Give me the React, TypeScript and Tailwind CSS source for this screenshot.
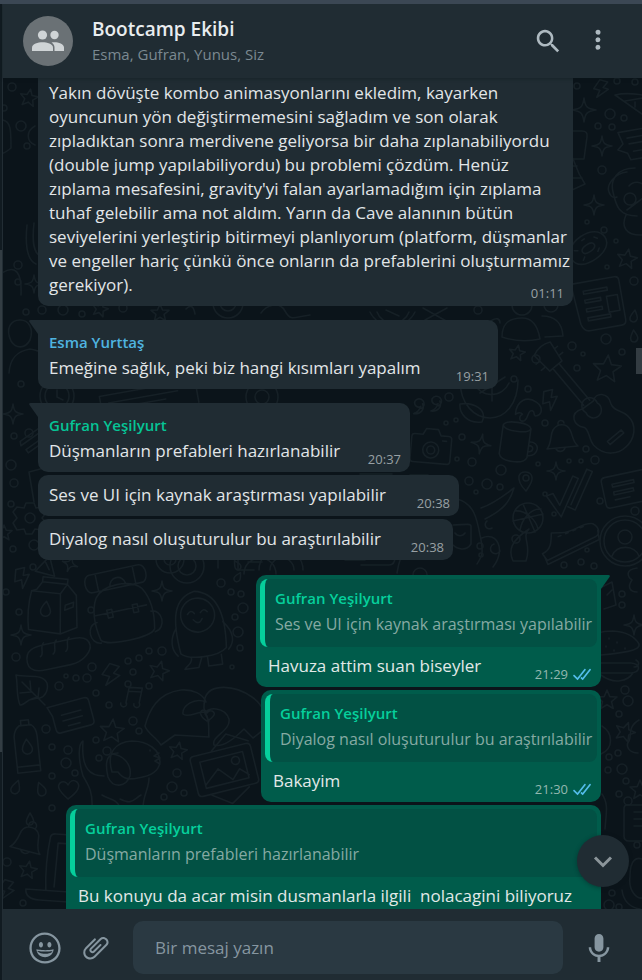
import React from "react";

type Point = [number, number];
type Placed = [number, number, number, number];

const sparkles: Placed[] = [
  [584, 110, 12, 0], [602, 146, 10, 0], [594, 205, 10, 0], [13, 414, 10, 0], [481, 444, 10, 10], [556, 471, 9, 0],
  [162, 591, 10, 0], [21, 635, 10, 0], [70, 564, 8, 20], [634, 625, 10, 0], [34, 284, 9, 0],
];
const stars: Placed[] = [
  [29, 98, 9, 10], [627, 259, 10, 10], [607, 369, 14, 5], [517, 353, 8, 10], [159, 671, 10, 15], [112, 731, 12, 5],
  [178, 751, 9, 10], [607, 700, 10, 0], [625, 732, 10, 20], [28, 870, 9, 10], [100, 309, 8, 15], [160, 313, 9, 0],
  [640, 790, 10, 0], [4, 533, 8, 0],
];
const rings: Placed[] = [
  [12, 87, 4, 0], [21, 126, 5, 0], [27, 146, 3, 0], [4, 108, 3, 0], [577, 86, 3, 0], [617, 81, 3, 0], [635, 82, 3, 0],
  [610, 114, 5, 0], [624, 118, 3, 0], [598, 126, 3, 0], [612, 127, 3, 0], [602, 170, 4, 0], [604, 230, 3, 0],
  [587, 222, 2, 0], [616, 241, 2, 0], [607, 267, 2, 0], [634, 281, 4, 0], [18, 265, 4, 0], [18, 282, 3, 0],
  [26, 312, 3, 0], [42, 310, 4, 0], [63, 310, 5, 0], [82, 314, 3, 0], [123, 308, 4, 0], [21, 384, 3, 0],
  [478, 310, 4, 0], [606, 339, 5, 0], [572, 346, 4, 0], [583, 354, 2, 0], [622, 352, 3, 0], [536, 359, 4, 0],
  [514, 379, 3, 0], [528, 389, 3, 0], [577, 368, 3, 0], [449, 397, 4, 0], [456, 420, 2, 0], [446, 423, 2, 0],
  [462, 437, 3, 0], [545, 423, 3, 0], [586, 449, 3, 0], [569, 461, 2, 0], [581, 461, 2, 0], [595, 460, 4, 0],
  [472, 462, 4, 0], [501, 470, 5, 0], [457, 459, 2, 0], [538, 464, 2, 0], [469, 481, 4, 0], [487, 484, 5, 0],
  [500, 487, 3, 0], [476, 492, 2, 0], [545, 494, 2, 0], [600, 501, 3, 0], [554, 514, 2, 0], [635, 511, 4, 0],
  [516, 539, 4, 0], [480, 546, 3, 0], [481, 555, 2, 0], [587, 550, 2, 0], [564, 565, 3, 0], [581, 562, 3, 0],
  [594, 566, 3, 0], [14, 436, 3, 0], [29, 433, 4, 0], [11, 465, 5, 0], [14, 483, 4, 0], [11, 504, 3, 0],
  [13, 549, 3, 0], [34, 545, 5, 0], [6, 592, 3, 0], [19, 612, 3, 0], [33, 567, 3, 0], [91, 610, 3, 0], [221, 583, 4, 0],
  [231, 592, 3, 0], [241, 594, 3, 0], [243, 608, 5, 0], [235, 617, 3, 0], [238, 632, 5, 0], [240, 648, 3, 0],
  [16, 657, 4, 0], [92, 667, 4, 0], [66, 676, 2, 0], [76, 678, 3, 0], [87, 678, 4, 0], [59, 686, 4, 0],
  [128, 661, 3, 0], [139, 658, 3, 0], [149, 651, 3, 0], [162, 651, 4, 0], [133, 672, 3, 0], [128, 684, 3, 0],
  [149, 686, 3, 0], [96, 693, 3, 0], [109, 705, 3, 0], [133, 721, 4, 0], [139, 731, 3, 0], [46, 729, 4, 0],
  [52, 747, 3, 0], [68, 750, 4, 0], [66, 763, 5, 0], [75, 773, 3, 0], [52, 776, 3, 0], [107, 751, 4, 0],
  [99, 758, 3, 0], [96, 740, 3, 0], [177, 773, 4, 0], [172, 787, 5, 0], [184, 793, 3, 0], [164, 797, 3, 0],
  [232, 667, 2, 0], [52, 808, 3, 0], [7, 862, 4, 0], [23, 903, 3, 0], [622, 594, 3, 0], [622, 605, 3, 0],
  [625, 690, 4, 0], [628, 701, 5, 0], [619, 714, 3, 0], [609, 757, 3, 0], [618, 753, 3, 0], [622, 769, 5, 0],
  [608, 770, 3, 0], [626, 781, 3, 0], [619, 794, 3, 0], [628, 801, 4, 0], [637, 845, 3, 0], [612, 893, 3, 0],
  [609, 905, 5, 0], [619, 907, 3, 0],
];
const bolts: Placed[] = [[601, 89, 9, 10], [22, 578, 10, -20], [111, 675, 11, 10], [550, 400, 10, -20], [6, 890, 10, 10]];
const drops: Placed[] = [
  [634, 316, 6, 10], [634, 336, 6, -5], [16, 787, 7, 20], [41, 789, 7, -20], [30, 819, 6, 0], [237, 565, 5, -30],
  [238, 577, 5, 30],
];

const starPath = "M0-1 .28-.34 1-.3.45.16.62.85 0 .47-.62.85-.45.16-1-.3-.28-.34Z";
const sparklePath = "M0-1C.1-.25.25-.1 1 0 .25.1.1.25 0 1-.1.25-.25.1-1 0-.25-.1-.1-.25 0-1Z";
const boltPath = "M-.3-1 .6-.9.2-.2.8-.1-.3 1-.1.15-.8.1Z";
const dropPath = "M0-1C.5-.2.65.1.6.4.5.9.2 1 0 1-.3 1-.6.8-.6.4-.6.1-.4-.3 0-1Z";

function Shapes({ items, d }: { items: Placed[]; d: string }) {
  return (
    <>
      {items.map(([x, y, r, turn], i) => (
        <path key={i} d={d} vectorEffect="non-scaling-stroke" transform={`translate(${x} ${y}) rotate(${turn}) scale(${r})`} />
      ))}
    </>
  );
}

const sketches: { at: Point; turn?: number; d: string }[] = [
  // bottle, bag and speech card along the left edge
  { at: [28, 745], turn: -6, d: "M-5-25h8v5h-8ZM-7-20h12c4 3 5 8 5 12V27h-23V-8c0-5 2-9 6-12ZM-13 21h23M-1-6c4 6 5 8 5 10a5 5 0 0 1-10 0c0-2 2-6 5-10Z" },
  { at: [70, 716], turn: -15, d: "M-20-14H18q4 0 4 4v20q0 4-4 4H-13q-4 0-4-4V-4ZM-8-3H12M-8 3H12M-4 9H8" },
  { at: [32, 690], d: "M-16-15c13 3 26-2 31 8 2 8-3 14-7 15-9-3-16 8-20 7-4-9-2-20-4-30ZM-10-8 13 15M-2-9l1 11-11 1M7-2 6 8l-9 2" },
  { at: [53, 607], turn: 6, d: "M-18-16-13-24H12L22-14 26 18 10 26-22 25Q-26 5-23-14ZM-23-14H6L12-24M6-14 10 26M-13-29H12v5h-25ZM-7-5c4 6 5 8 5 10a5 5 0 0 1-10 0c0-2 2-6 5-10ZM12-3l8-4v5l-8 4Z" },
  { at: [58, 653], turn: -12, d: "M-32 3c0-13 10-14 22-14H18c12 0 15 5 15 10S25 14 10 14h-25c-11 0-17-4-17-11ZM-18 0c5-2 1-10 6-13M-5 0c5-2 1-10 6-13M8 0c5-2 1-10 6-13" },
  { at: [122, 605], turn: -12, d: "M-28 30c-3-15-3-30 4-42 9-12 37-12 47 0 7 12 7 28 4 42-5 8-50 8-55 0ZM-28 5h52M-28 12c-12 0-12 20 0 21M27 12c12 0 12 20 0 21M-16 2h5v8h-5ZM10 2h5v8h-5ZM-26-36h50c8 0 8 18 0 18h-50c-8 0-8-18 0-18ZM-20-36v18M18-36v18M-8-20a8 8 0 0 1 16 0" },
  { at: [199, 625], turn: -8, d: "M-22 26C-26-10-22-30 0-34c22 4 28 26 24 60-9 8-38 8-46 0ZM-17-10a17 17 0 1 0 34 0 17 17 0 1 0-34 0M-10-12q4-5 7 0M3-12q4-5 7 0M-5-6q5 7 9 0M-23 0c-8 10-8 21-2 28M24 0c10 12 9 22 2 28M-12 31c0 8-6 7-8 11h14l4-9M4 33v9h14v-10" },
  { at: [205, 712], d: "M-44 33c-5-8-14-12-16-19 4-15 12-33 36-36 12-1 22 4 25 12-12-5-24 4-23 12 4 4 14-2 20-2 8 2 5 22 6 25l-34-2ZM4 9C-3-2-1-8 0-14c5-15 30-13 47-1 12 8 17 24 15 30l-14 11-9-9c-10 10-21 19-30 16-3-9 17-14 15-26-4-12-22-13-24-5M2 9c-8-5-8-11-3-11 2 0 3 3 3 3s2-3 5-2c5 2 1 7-5 10Z" },
  { at: [132, 765], d: "M-20 7c-6-20 4-30 20-31 16 0 28 9 28 21-1 9-8 14-22 16-9 2-15 1-20-6ZM-20-11c10 1 20 9 18 22-4 11-17 13-22 1C-28-5-24-12-14-12M18-15v1M27-12l-5 3 6 2-5 3 5 3M17 13c0 11-6 17-6 30M-28 11c-14 0-23-7-21-35-5 3-5 18 0 35 5 9 10 15 9 32M-30 30c9 5 14 4 18 12M9 30C1 35 0 40-12 34" },
  { at: [226, 768], turn: -14, d: "M-29-19h54q4 0 4 4v33q0 4-4 4h-54q-4 0-4-4v-33q0-4 4-4ZM-24-12h44v27h-44ZM-24 12l16-13 12 14 9-9 8 8M7-5a4 4 0 1 0 8 0 4 4 0 1 0-8 0M-10-20l18-13 20 12M-20 23l18 13 20-12" },
  { at: [68, 789], d: "M0 10C-10 1-11-3-8-6c4-3 7 0 8 2 2-4 5-6 9-3 4 4 1 10-9 17Z" },
  { at: [28, 841], turn: 15, d: "M-16 10c5-4 6-13 7-18 3-8 15-8 18 0 1 5 1 14 6 18ZM-3-14a4 4 0 1 1 7 0M-5 10a5 5 0 0 0 9 0" },
  { at: [70, 860], turn: 4, d: "M-22 32c-2-20-1-40 1-54q1-3 5-3H30M-14 28l1-44H30M-42 32H40c-1 9-5 10-10 10h-58c-8 0-14-2-14-10Z" },
  { at: [30, 517], d: "M-4-14h8l2 5 6-1 4 6-4 5 4 5-4 7-7-1-3 5h-6l-2-5-7 1-4-7 4-5-4-6 4-5 7 1ZM-5 1A5 5 0 1 0 5 1 5 5 0 1 0-5 1" },
  { at: [20, 335], d: "M-9 6c-6-13 0-21 9-21s14 9 10 20c-5 9-14 9-19 1ZM-11 38c1-16 9-22 21-24 9 1 12 4 18 8" },
  { at: [8, 150], d: "M-6-30c9 1 9 10 9 28-7 6-11 7-14 3M27-24c-9 5-9 15 0 19" },
  { at: [31, 245], d: "M-4-20c-2 20 0 35 9 39M3-22c-2 18-1 31 8 34M-29 28c14-9 20 0 19 22" },
  { at: [57, 396], d: "M-17 0a17 17 0 1 0 34 0 17 17 0 1 0-34 0M-12 0a12 12 0 1 0 24 0 12 12 0 1 0-24 0M0-6v7l6 3" },
  { at: [148, 396], turn: -10, d: "M-48-8H42q7 0 7 7v16M-40 0h70M-38 6h55M-48-8v20" },
  { at: [262, 397], d: "M-16 0a16 16 0 1 0 32 0 16 16 0 1 0-32 0M-7 0a7 7 0 1 0 14 0 7 7 0 1 0-14 0" },
  { at: [228, 303], d: "M-15 0a15 15 0 0 0 30 0M-8 0a8 8 0 0 0 16 0M33 10c5-7 18-13 24-2s9 6 25 4M-42 6q7-7 9 5" },
  { at: [395, 312], d: "M-25 0a25 25 0 0 0 45 0M-18 0a17 17 0 0 0 32 0M-9-2 4 4M28-4l25 14M30 8l22-12" },
  { at: [520, 315], d: "M-18 22c0-13 6-19 20-19 11 0 16 9 18 21-13 3-26 2-38-2ZM-8-10a10 10 0 0 0 20 0M24-10a7 7 0 0 0 14 0M22 1c12 0 20 6 21 20l-18 1M-32 8c10-8 12-3 12 0" },
  // camera, coffee cup, bell and guitar on the right
  { at: [431, 447], turn: 5, d: "M-17-12h8l3-6H6l3 6h8q3 0 3 3v22q0 3-3 3h-34q-3 0-3-3V-9q0-3 3-3ZM-8 3A8 8 0 1 0 8 3 8 8 0 1 0-8 3M-4 3A4 4 0 1 0 4 3 4 4 0 1 0-4 3M11-7h4" },
  { at: [517, 442], turn: 8, d: "M-16-15V14q2 6 14 6t14-6v-29M-16-15c2-6 26-6 28 0-2 6-26 6-28 0M12-2c12-2 12 14 0 14M12 2c6-1 6 6 0 6" },
  { at: [561, 440], d: "M-14 9c5-6 3-14 6-19 4-7 14-7 17 0 3 5 2 11 8 16ZM-3-16a3 3 0 1 1 6-1M-5 9a5 5 0 0 0 9-1" },
  { at: [597, 415], turn: -40, d: "M-7-14c-14-6-18 8-11 15 3 5-4 12-4 20 1 16 14 23 23 22 12 0 24-9 22-23-1-8-8-12-5-20 5-10-4-19-12-13ZM-7-9a8 8 0 1 0 15 0 8 8 0 1 0-15 0M-9 27H9v4H-9ZM-4-16v-48M4-16v-48M-8-64h16l3-22q-10-5-21 0ZM-14-70h4M-14-78h4M10-70h4M10-78h4" },
  { at: [488, 395], d: "M-28-15c0 25 15 38 30 38s28-14 28-38M-28 9c-1 9 7 20 22 18 6-13-9-20-22-18ZM-14-12a19 19 0 0 0 35 0M-8-2 17-18M4 6 4-10" },
  { at: [427, 410], turn: 15, d: "M-6 0a5 5 0 1 0-8-5c0 4 5 6 7 3 0 5-2 7-5 9 7-1 10-7 6-12M10-7A5 5 0 1 0 2-12c0 4 5 6 7 3 0 5-2 7-5 9 7-1 10-7 6-12" },
  { at: [528, 411], turn: 8, d: "M-12 5c-1-14 9-20 19-15 8 4 8 12 1 14-3-1 0-4-4-5-5 1-2 7-6 11-5 3-7-3-3-6-2-2-5-1-7 1Z" },
  { at: [526, 483], d: "M0 8C-6 2-8-2-7-7c2-6 12-5 13 1 1 5-3 9-6 14ZM-3-5a3 3 0 1 0 6 0 3 3 0 1 0-6 0" },
  { at: [574, 493], turn: 24, d: "M-24 14l5-5 11 8 0-32h6v42ZM2 12V-27h6v42H0" },
  { at: [623, 488], turn: -12, d: "M-16-14H35v31h-51q-4 0-4-4V-10q0-4 4-4ZM-10-6H12v3h-22ZM-10 2H10v3h-20ZM-10 10H5" },
  { at: [528, 518], d: "M-15 0a15 15 0 1 0 30 0 15 15 0 1 0-30 0M-13-7C-2-8 8 2 10 11M-8 12C-6 1 3-10 13-9M-15 3 15-4M-5-14 7 14" },
  { at: [571, 539], turn: -22, d: "M-32 3c10 0 13-9 16-16l8 3c12 6 24-2 34 4 5 6 3 12-2 13l-54 4ZM-31 7v8l57-4 2-9M-11-7h3M-3-7h3M5-7h3M13-7h3" },
  { at: [625, 541], d: "M-25 0a25 25 0 1 0 50 0 25 25 0 1 0-50 0M-21 0a21 21 0 1 0 42 0 21 21 0 1 0-42 0M-7-4a7 7 0 1 0 14 0 7 7 0 1 0-14 0M-13 15c5-12 23-11 27 0" },
  { at: [490, 525], d: "M-33-26c17 4 20 20 23 36 5 22 0 23-3 29M-9-17c14-5 22-12 33-20-4 14-11 22-29 31M-8 13c14-7 25 11 11 29M39 4C31 12 42 20 36 36h-13c-5-11-2-20 16-32M4 19a5 5 0 1 0 6 7M-3-4a3 3 0 1 0 5 7M-37 0c8 0 18-2 18 1v18c-5 8-14 5-18 1M-35 8a6 6 0 0 0 10 0" },
  { at: [405, 565], d: "M-44 0h28q6 0 6-8v-5M-8 8c4-25 12-28 22-22M8 10a7 7 0 0 1 14 0M-60-5h20" },
  { at: [187, 566], d: "M-17 0a17 17 0 1 0 34 0 17 17 0 1 0-34 0M-9 0a9 9 0 1 0 18 0 9 9 0 1 0-18 0M13-12h18v14M57 8a16 16 0 0 1 32 0M61-4h14" },
  { at: [283, 565], d: "M-24 5a22 22 0 1 1 44 0M-13 5a12 12 0 0 1 24 0M-45-10v15h16" },
  { at: [170, 559], d: "M-14 0a14 14 0 0 0 28 0M-6 0a6 6 0 0 0 12 0" },
  { at: [47, 566], turn: 15, d: "M0-10 10 8H-10ZM-2-3 3 3" },
  { at: [131, 698], turn: 12, d: "M-4 6V-10L9-12V3M-4-6 9-8M-9 7a3 3 0 1 0 5-2M4 5a3 3 0 1 0 5-2" },
  { at: [603, 300], turn: -10, d: "M-29-21H15q4 0 4 4v40q0 5-5 5h-32q-6 0-8-8ZM-18-12H6v3h-24ZM-18-3H-2v3h-16ZM-18 6H-2v3h-16ZM-18 15H5v3h-23ZM4-3h11v16H4Z" },
  { at: [587, 248], turn: -35, d: "M-19 1c0-8 8-14 20-14s20 6 20 14c0 8-8 13-20 13s-20-5-20-13ZM-6 1c0-5 14-5 14 0s-14 5-14 0M-12-5l3 2M0-9h3M12-5l2 3M-10 8l3-2M7 9l3-2" },
  { at: [635, 198], d: "M0-30c-18 0-25 12-22 24 3 14 6 24 24 24M-8-26C-20-25-29-13-26-6c2 6 6 6 8 5M-11 1a6 6 0 1 0 12 0 6 6 0 1 0-12 0M-8 12l16-12M-9 17C-14 28-10 38 8 37M-6-12c5-6 12-4 16 0" },
  { at: [580, 175], d: "M-8-18c3 4 3 12 13 27L-8 15M-9 3H2M-10-9H-3" },
  { at: [634, 143], turn: -10, d: "M-14-13h24M-14-13l3 12-6 5 9 5 2 7h18M-6-6H18M-5 0H18M-2 8H18" },
  { at: [627, 101], d: "M-12-6c12-3 20-1 27 0M-12-6 15 13M-2 0 16-3M8 6v-5" },
  { at: [576, 148], d: "M-3-17h9q6 0 5 6l-3 22H-6" },
  { at: [621, 660], d: "M-20 3h30c10 1 10 9 0 10h-30M-20-5C0-7 20-9 18-16 14-23 7-28-8-29-14-29-20-28-22-27M-20 15c13 10 27 6 32-2M-12-22v1M-4-18v1M-15-14v1M-7-10v1M4-12v1M15 0c5 3 2 7-2 7" },
  { at: [637, 575], d: "M0-7c-13 2-9 9-5 12-5 7-2 12 5 12M-35 12l10-5 4 23-12 4M-30 20l5-5" },
  { at: [607, 735], d: "M-5-9c11 7 12 22-1 28M32-15c-12 7-7 16-10 21-4 5 0 12 9 12" },
  { at: [605, 814], d: "M-3-20c7 10 4 20 3 35M0 22v13M22-9H50V27H24q-5 0-5-5V-5q0-4 3-4ZM29-2H46M29 5H46M29 12H46" },
  { at: [634, 880], d: "M-4-4c0-17 7-19 12-17M-12 10c2 15 12 18 18 19M-4-4c-2 15 7 23 12 22" },
  { at: [28, 442], turn: -35, d: "M-6-5H20v4H-8ZM-6 5H16v4H-6Z" },
  { at: [34, 490], d: "M10-22-5-18 0 12" },
  { at: [400, 475], d: "M-40-1H-8M10 0h18M40 10l10 8" },
];

function Wallpaper() {
  return (
    <svg
      aria-hidden="true"
      className="absolute left-0 top-0 h-[831px] w-[642px] fill-none stroke-[#162026]"
      viewBox="0 78 642 831"
      strokeWidth="1.6"
      strokeLinejoin="round"
      strokeLinecap="round"
    >
      <Shapes items={sparkles} d={sparklePath} />
      <Shapes items={stars} d={starPath} />
      <Shapes items={bolts} d={boltPath} />
      <Shapes items={drops} d={dropPath} />
      {rings.map(([x, y, r], i) => (
        <circle key={i} cx={x} cy={y} r={r} />
      ))}
      {sketches.map(({ at, turn = 0, d }, i) => (
        <path key={i} d={d} transform={`translate(${at[0]} ${at[1]}) rotate(${turn})`} />
      ))}
    </svg>
  );
}

function Icon({ d, className }: { d: string; className: string }) {
  return (
    <svg viewBox="0 0 24 24" className={className} fill="currentColor" aria-hidden="true">
      <path d={d} />
    </svg>
  );
}

const icons = {
  search:
    "M15.9 14.3H15l-.3-.3c1-1.1 1.6-2.7 1.6-4.3 0-3.7-3-6.7-6.7-6.7S3 6 3 9.7s3 6.7 6.7 6.7c1.6 0 3.2-.6 4.3-1.6l.3.3v.8l5.1 5.1 1.5-1.5-5-5.2zm-6.2 0c-2.6 0-4.6-2.1-4.6-4.6s2.1-4.6 4.6-4.6 4.6 2.1 4.6 4.6-2 4.6-4.6 4.6z",
  menu: "M12 7a2 2 0 1 0-.001-4.001A2 2 0 0 0 12 7zm0 2a2 2 0 1 0-.001 3.999A2 2 0 0 0 12 9zm0 6a2 2 0 1 0-.001 3.999A2 2 0 0 0 12 15z",
  smile:
    "M9.153 11.603c.795 0 1.44-.88 1.44-1.962s-.645-1.96-1.44-1.96c-.795 0-1.44.88-1.44 1.96s.645 1.965 1.44 1.965zM5.95 12.965c-.027-.307-.132 5.218 6.062 5.55 6.066-.25 6.066-5.55 6.066-5.55-6.078 1.416-12.13 0-12.13 0zm11.362 1.108s-.67 1.96-5.05 1.96c-3.506 0-5.39-1.165-5.608-1.96 0 0 5.912 1.055 10.658 0zM11.804 1.011C5.61 1.011.978 6.034.978 12.228s4.826 10.761 11.021 10.761S23.02 18.423 23.02 12.228c.001-6.194-5.021-11.217-11.216-11.217zM12 21.354c-5.273 0-9.381-3.886-9.381-9.159s3.942-9.548 9.215-9.548 9.548 4.275 9.548 9.548c-.001 5.272-4.109 9.159-9.382 9.159zm3.108-9.751c.795 0 1.44-.88 1.44-1.962s-.645-1.96-1.44-1.96c-.795 0-1.44.88-1.44 1.96s.645 1.962 1.44 1.962z",
  clip: "M1.816 15.556v.002c0 1.502.584 2.912 1.646 3.972s2.472 1.647 3.974 1.647a5.58 5.58 0 0 0 3.972-1.645l9.547-9.548c.769-.768 1.147-1.767 1.058-2.817-.079-.968-.548-1.927-1.319-2.698-1.594-1.592-4.068-1.711-5.517-.262l-7.916 7.915c-.881.881-.792 2.25.214 3.261.959.958 2.423 1.053 3.263.215l5.511-5.512c.28-.28.267-.722.053-.936l-.244-.244c-.191-.191-.567-.349-.957.04l-5.506 5.506c-.18.18-.635.127-.976-.214-.098-.097-.576-.613-.213-.973l7.915-7.917c.818-.817 2.267-.699 3.23.262.5.501.802 1.1.849 1.685.051.573-.156 1.111-.589 1.543l-9.547 9.549a3.97 3.97 0 0 1-2.829 1.171 3.975 3.975 0 0 1-2.83-1.173 3.973 3.973 0 0 1-1.172-2.828c0-1.071.415-2.076 1.172-2.83l7.209-7.211c.157-.157.264-.579.028-.814L11.5 4.36a.572.572 0 0 0-.834.018l-7.205 7.207a5.577 5.577 0 0 0-1.645 3.971z",
  mic: "M11.999 14.942c2.001 0 3.531-1.53 3.531-3.531V4.35c0-2.001-1.53-3.531-3.531-3.531S8.469 2.35 8.469 4.35v7.061c0 2.001 1.53 3.531 3.53 3.531zm6.238-3.53c0 3.531-2.942 6.002-6.237 6.002s-6.237-2.471-6.237-6.002H3.761c0 4.001 3.178 7.297 7.061 7.885v3.884h2.354v-3.884c3.884-.588 7.061-3.884 7.061-7.885h-2z",
};

function ReadTicks() {
  return (
    <svg viewBox="0 0 16 15" className="h-[19px] w-5 text-[#53bdeb]" fill="currentColor" role="img" aria-label="Okundu">
      <path d="M15.01 3.316l-.478-.372a.365.365 0 0 0-.51.063L8.666 9.879a.32.32 0 0 1-.484.033l-.358-.325a.319.319 0 0 0-.484.032l-.378.483a.418.418 0 0 0 .036.541l1.32 1.266c.143.14.361.125.484-.033l6.272-8.048a.366.366 0 0 0-.064-.512zm-4.1 0l-.478-.372a.365.365 0 0 0-.51.063L4.566 9.879a.32.32 0 0 1-.484.033L1.891 7.769a.366.366 0 0 0-.515.006l-.423.433a.364.364 0 0 0 .006.514l3.258 3.185c.143.14.361.125.484-.033l6.272-8.048a.365.365 0 0 0-.063-.51z" />
    </svg>
  );
}

function Received({
  width,
  time,
  name,
  nameColor = "",
  className = "",
  lines,
}: {
  width: string;
  time: string;
  name?: string;
  nameColor?: string;
  className?: string;
  lines: string[];
}) {
  return (
    <article
      className={`relative flex max-w-full flex-col self-start bg-[#202c33] pl-[11px] pr-[9px] pb-[5px] ${
        name ? "rounded-[10px] rounded-tl-none" : "rounded-[10px]"
      } ${width} ${className}`}
    >
      {name && (
        <>
          <svg aria-hidden="true" viewBox="0 0 9 14" className="absolute -left-[9px] top-0 h-3.5 w-[9px] fill-[#202c33]">
            <path d="M9 14 .5 2Q-.5 0 1.500 0H9Z" />
          </svg>
          <h2 className={`text-[15px] font-semibold leading-7 ${nameColor}`}>{name}</h2>
        </>
      )}
      <p className="whitespace-nowrap text-[17px] leading-6 text-[#e2e6e8]">
        {lines.map((line) => (
          <span key={line} className="block w-fit">
            {line}
          </span>
        ))}
      </p>
      <time className="-mt-[11px] self-end text-[13px] leading-[15px] text-[#98a0a4]">{time}</time>
    </article>
  );
}

function Sent({
  width,
  time,
  quote,
  tail = false,
  className = "",
  children,
}: {
  width: string;
  time?: string;
  quote: string;
  tail?: boolean;
  className?: string;
  children: React.ReactNode;
}) {
  return (
    <article
      className={`relative flex max-w-full flex-col self-end bg-[#005c4b] px-1 pt-1 pb-[5px] ${
        tail ? "rounded-[10px] rounded-tr-none" : "rounded-[10px]"
      } ${width} ${className}`}
    >
      {tail && (
        <svg aria-hidden="true" viewBox="0 0 9 14" className="absolute -right-[9px] top-0 h-3.5 w-[9px] fill-[#005c4b]">
          <path d="M0 14 8.500 2Q9.500 0 7.500 0H0Z" />
        </svg>
      )}
      <blockquote className="overflow-hidden rounded-[8px] border-l-[5px] border-[#06cf9c] bg-[#025144] pt-[7px] pb-[9px] pl-2.5">
        <h2 className="text-[15px] font-semibold leading-6 text-[#06cf9c]">Gufran Yeşilyurt</h2>
        <p className="whitespace-nowrap text-[16px] leading-7 text-[#86aaa3]">{quote}</p>
      </blockquote>
      <p className="mt-[7px] whitespace-pre pl-2 text-[17px] leading-6 text-[#e2e9e8]">{children}</p>
      {time ? (
        <div className="-mt-[11px] flex h-[15px] items-center gap-1 self-end pr-[5px]">
          <time className="text-[13px] leading-[15px] text-[#93b8b0]">{time}</time>
          <ReadTicks />
        </div>
      ) : (
        <div className="h-6" />
      )}
    </article>
  );
}

export default function App() {
  return (
    <div className="flex h-screen flex-col overflow-hidden border-t-4 border-[#3b4754] bg-[#0b141a] font-['Open_Sans','Noto_Sans',sans-serif]">
      <div className="flex min-h-0 flex-1">
        <div className="flex w-[3px] flex-col border-r border-[#222d34] bg-[#111b21]">
          <div className="h-[246px]" />
          <div className="h-[502px] bg-[#333d43]" />
        </div>
        <main className="flex min-w-0 flex-1 flex-col">
          <header className="z-10 flex h-[74px] shrink-0 items-center bg-[#202c33] pl-5 pr-[29px] shadow-[0_1px_3px_rgba(11,20,26,0.4)]">
            <div className="flex size-[50px] items-center justify-center rounded-full bg-[#6a7175]">
              <svg viewBox="0 0 32 22" className="h-[22px] w-8 fill-[#cfd4d6]" aria-hidden="true">
                <circle cx="10.500" cy="5" r="4.600" />
                <circle cx="22.500" cy="5" r="4.200" />
                <path d="M0 21v-3.500C0 14 6 12.300 10.500 12.300S21 14 21 17.500V21Z" />
                <path d="M22.500 21v-3.500c0-2-1-3.700-3-4.900 1-.2 2-.3 3-.3 4 0 9.500 1.700 9.500 5.200V21Z" />
              </svg>
            </div>
            <div className="ml-[19px] min-w-0 flex-1">
              <h1 className="truncate text-[19px] font-semibold leading-[26px] text-[#e9edef]">Bootcamp Ekibi</h1>
              <p className="truncate text-[15px] leading-6 text-[#7b8991]">Esma, Gufran, Yunus, Siz</p>
            </div>
            <div className="flex items-center gap-5 text-[#aebac1]">
              <button type="button" aria-label="Ara" className="size-[30px]">
                <Icon d={icons.search} className="size-[30px]" />
              </button>
              <button type="button" aria-label="Menü" className="size-[30px]">
                <Icon d={icons.menu} className="size-[30px]" />
              </button>
            </div>
          </header>

          <section className="relative min-h-0 flex-1 overflow-hidden" aria-label="Mesajlar">
            <div className="absolute inset-y-0 -left-[3px] right-0 overflow-hidden">
              <Wallpaper />
            </div>
            <div className="relative flex flex-col pl-[35px] pr-[41px]">
              <Received
                width="w-[535px]"
                time="01:11"
                className="rounded-t-none pt-[3px]"
                lines={[
                  "Yakın dövüşte kombo animasyonlarını ekledim, kayarken",
                  "oyuncunun yön değiştirmemesini sağladım ve son olarak",
                  "zıpladıktan sonra merdivene geliyorsa bir daha zıplanabiliyordu",
                  "(double jump yapılabiliyordu) bu problemi çözdüm. Henüz",
                  "zıplama mesafesini, gravity'yi falan ayarlamadığım için zıplama",
                  "tuhaf gelebilir ama not aldım. Yarın da Cave alanının bütün",
                  "seviyelerini yerleştirip bitirmeyi planlıyorum (platform, düşmanlar",
                  "ve engeller hariç çünkü önce onların da prefablerini oluşturmamız",
                  "gerekiyor).",
                ]}
              />
              <Received
                width="w-[460px]"
                time="19:31"
                name="Esma Yurttaş"
                nameColor="text-[#4fb4e0]"
                className="mt-3.5 pt-2"
                lines={["Emeğine sağlık, peki biz hangi kısımları yapalım"]}
              />
              <Received
                width="w-[372px]"
                time="20:37"
                name="Gufran Yeşilyurt"
                nameColor="text-[#06c496]"
                className="mt-3.5 pt-2"
                lines={["Düşmanların prefableri hazırlanabilir"]}
              />
              <Received
                width="w-[421px]"
                time="20:38"
                className="mt-[3px] pt-2"
                lines={["Ses ve UI için kaynak araştırması yapılabilir"]}
              />
              <Received
                width="w-[415px]"
                time="20:38"
                className="mt-[3px] pt-2"
                lines={["Diyalog nasıl oluşuturulur bu araştırılabilir"]}
              />
              <Sent width="w-[345px]" time="21:29" quote="Ses ve UI için kaynak araştırması yapılabilir" tail className="mt-[15px]">
                Havuza attim suan biseyler
              </Sent>
              <Sent width="w-[340px]" time="21:30" quote="Diyalog nasıl oluşuturulur bu araştırılabilir" className="mt-[3px]">
                Bakayim
              </Sent>
              <Sent width="w-[535px]" quote="Düşmanların prefableri hazırlanabilir" className="mt-[3px]">
                {"Bu konuyu da acar misin dusmanlarla ilgili  nolacagini biliyoruz"}
              </Sent>
            </div>
            <div className="absolute right-0 top-[270px] h-[26px] w-1.5 bg-[#333c42]" />
            <button
              type="button"
              aria-label="En alta git"
              className="absolute bottom-[22px] right-[13px] flex size-[52px] items-center justify-center rounded-full bg-[#202c33] text-[#8b959a] shadow-[0_1px_4px_rgba(11,20,26,0.4)]"
            >
              <svg viewBox="0 0 20 12" className="mt-0.5 h-3 w-5 fill-none stroke-current" strokeWidth="3" aria-hidden="true">
                <path d="M2 1.500 10 9.500 18 1.500" />
              </svg>
            </button>
          </section>

          <footer className="flex h-[71px] shrink-0 items-center bg-[#202c33] pl-[25px] pr-7 pt-[6px] text-[#8696a0]">
            <button type="button" aria-label="Emoji" className="size-[34px]">
              <Icon d={icons.smile} className="size-[34px]" />
            </button>
            <button type="button" aria-label="Ekle" className="ml-[19px] size-[30px]">
              <Icon d={icons.clip} className="size-[30px]" />
            </button>
            <input
              type="text"
              aria-label="Bir mesaj yazın"
              placeholder="Bir mesaj yazın"
              className="ml-[22px] mr-[21px] h-[53px] min-w-0 flex-1 rounded-[10px] bg-[#2a3942] px-[22px] text-[17px] text-[#d1d7db] outline-none placeholder:text-[#8696a0]"
            />
            <button type="button" aria-label="Sesli mesaj" className="size-[30px]">
              <Icon d={icons.mic} className="size-[30px]" />
            </button>
          </footer>
        </main>
      </div>
    </div>
  );
}
